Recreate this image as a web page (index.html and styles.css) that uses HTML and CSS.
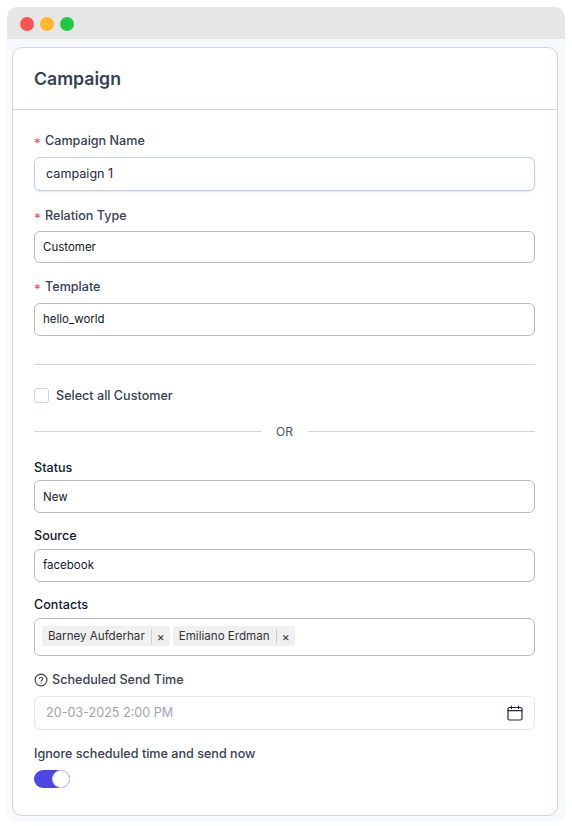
FILE: index.html
```html
<!DOCTYPE html>
<html lang="en">
<head>
<meta charset="utf-8">
<title>Campaign</title>
<link rel="stylesheet" href="styles.css">
</head>
<body>
<div class="window">
  <div class="titlebar">
    <span class="dot dot-red"></span>
    <span class="dot dot-yellow"></span>
    <span class="dot dot-green"></span>
  </div>
  <div class="canvas">
    <section class="card">
      <header class="card-head"><h1 class="card-title">Campaign</h1></header>
      <form class="card-body">
        <div class="label label-a"><span class="req">*</span>Campaign Name</div>
        <div class="input input-name">campaign 1</div>

        <div class="label label-b"><span class="req">*</span>Relation Type</div>
        <div class="select select-relation">Customer</div>

        <div class="label label-c"><span class="req">*</span>Template</div>
        <div class="select select-template">hello_world</div>

        <div class="rule"></div>

        <div class="check-row"><span class="checkbox"></span><span class="check-text">Select all Customer</span></div>

        <div class="or-row"><span class="or-line"></span><span class="or-text">OR</span><span class="or-line"></span></div>

        <div class="label-dark label-status">Status</div>
        <div class="select select-status">New</div>

        <div class="label-dark label-source">Source</div>
        <div class="select select-source">facebook</div>

        <div class="label-dark label-contacts">Contacts</div>
        <div class="select select-multi">
          <span class="chip"><span class="chip-text">Barney Aufderhar</span><span class="chip-x">×</span></span>
          <span class="chip"><span class="chip-text">Emiliano Erdman</span><span class="chip-x">×</span></span>
        </div>

        <div class="label label-sched">
          <svg class="help-icon" width="14" height="14" viewBox="0 0 14 14" fill="none" stroke="#374151" stroke-width="1.1" stroke-linecap="round"><circle cx="7" cy="7" r="5.9"/><path d="M5.3 5.5a1.8 1.8 0 0 1 3.5.4c0 1.1-1.7 1.4-1.7 2.3"/><path d="M7.1 10.1v.1"/></svg>
          Scheduled Send Time
        </div>
        <div class="input input-date">
          <span class="date-text">20-03-2025 2:00 PM</span>
          <svg class="cal-icon" width="16" height="16" viewBox="0 0 16 16" fill="none" stroke="#1f2937" stroke-width="1.2" stroke-linecap="round" stroke-linejoin="round"><rect x="1" y="2.5" width="14" height="12.5" rx="1.5"/><path d="M1 5.6h14"/><path d="M4.5 1v2.4M11.5 1v2.4"/></svg>
        </div>

        <div class="label label-ignore">Ignore scheduled time and send now</div>
        <div class="toggle"><span class="knob"></span></div>
      </form>
    </section>
  </div>
</div>
</body>
</html>
```

FILE: styles.css
```css
* { box-sizing: border-box; }
html, body { margin: 0; padding: 0; background: #fff; }
body { padding: 7px 7px 0; font-family: Inter, "Liberation Sans", sans-serif; }

.window { width: 558px; height: 814px; border-radius: 10px 10px 8px 8px; overflow: hidden; }
.titlebar { height: 32px; background: #e6e6e6; display: flex; align-items: center; gap: 6px; padding-left: 13px; padding-top: 2px; }
.dot { width: 14px; height: 14px; border-radius: 50%; }
.dot-red { background: #ff5252; }
.dot-yellow { background: #ffb928; }
.dot-green { background: #24c840; }

.canvas { height: 782px; background: #f8f9fc; padding: 8px 7px 0 5px; }
.card { height: 769px; background: #fff; border: 1px solid #cbd5e6; border-radius: 10px; }
.card-head { height: 62px; border-bottom: 1px solid #cbd5e1; display: flex; align-items: center; padding-left: 21px; }
.card-title { margin: 0; font-size: 17.7px; font-weight: 600; color: #374151; line-height: 24px; }

.card-body { padding: 0 22px 0 21px; display: flex; flex-direction: column; }

.label { font-size: 12.6px; font-weight: 500; line-height: 16px; color: #374151; display: flex; align-items: center; }
.label-dark { font-size: 12.6px; font-weight: 500; line-height: 16px; color: #111827; }
.req { color: #f0526b; font-size: 13px; width: 11px; flex: none; position: relative; top: 2px; }

.label-a { margin-top: 23px; }
.label-b { margin-top: 17px; }
.label-c { margin-top: 16px; }
.label-status { margin-top: 21px; }
.label-source { margin-top: 15px; }
.label-contacts { margin-top: 15px; }
.label-sched { margin-top: 16px; gap: 4px; }
.label-ignore { margin-top: 16px; }

.input, .select { width: 501px; background: #fff; display: flex; align-items: center; color: #111827; }
.input { border-radius: 6px; font-size: 12.6px; padding-bottom: 1px; }
.input-name { height: 34px; margin-top: 8px; border: 1px solid #c5d0e4; padding-left: 11px; box-shadow: 0 1px 2px rgba(148, 163, 184, .25); color: #1f2937; }
.select { border: 1px solid #b8bcc2; border-radius: 6px; font-size: 11.5px; padding: 0 0 0 8px; height: 33px; margin-top: 5px; }
.select-relation { height: 32px; margin-top: 7px; }
.select-template { margin-top: 8px; padding-bottom: 1px; }
.select-status { margin-top: 4px; }
.select-source { margin-top: 5px; padding-bottom: 1px; }
.select-multi { height: 38px; margin-top: 5px; gap: 3px; padding: 0 0 2px 7px; }

.chip { display: flex; align-items: center; height: 20px; background: #f0f0f0; border-radius: 2px; color: #333; font-size: 11.6px; font-weight: 400; }
.chip-text { padding: 0 6px 0 6px; height: 15px; line-height: 15px; border-right: 1px solid #ccc; }
.chip-x { width: 18px; text-align: center; font-size: 12px; color: #333; }

.rule { height: 1px; background: #d1d5db; margin-top: 28px; }

.check-row { display: flex; align-items: center; gap: 7px; margin-top: 22px; height: 16px; }
.checkbox { width: 15px; height: 15px; background: #fff; border: 1px solid #cbd5e1; border-radius: 3px; }
.check-text { font-size: 12.6px; font-weight: 500; color: #374151; }

.or-row { display: flex; align-items: center; gap: 15px; margin-top: 20px; height: 16px; }
.or-line { flex: 1; height: 1px; background: #d1d5db; }
.or-text { font-size: 12px; color: #4b5563; }

.input-date { height: 34px; margin-top: 8px; border: 1px solid #e5e7eb; padding: 0 11px 1px; justify-content: space-between; }
.date-text { color: #9ca3af; font-size: 12.6px; }
.cal-icon { flex: none; }
.help-icon { flex: none; }

.toggle { width: 36px; height: 18px; margin-top: 8px; border-radius: 9px; background: #4f46e5; position: relative; }
.knob { position: absolute; right: 0; top: 0; width: 18px; height: 18px; border-radius: 50%; background: #fff; border: 1px solid #d1d5f0; }
```
